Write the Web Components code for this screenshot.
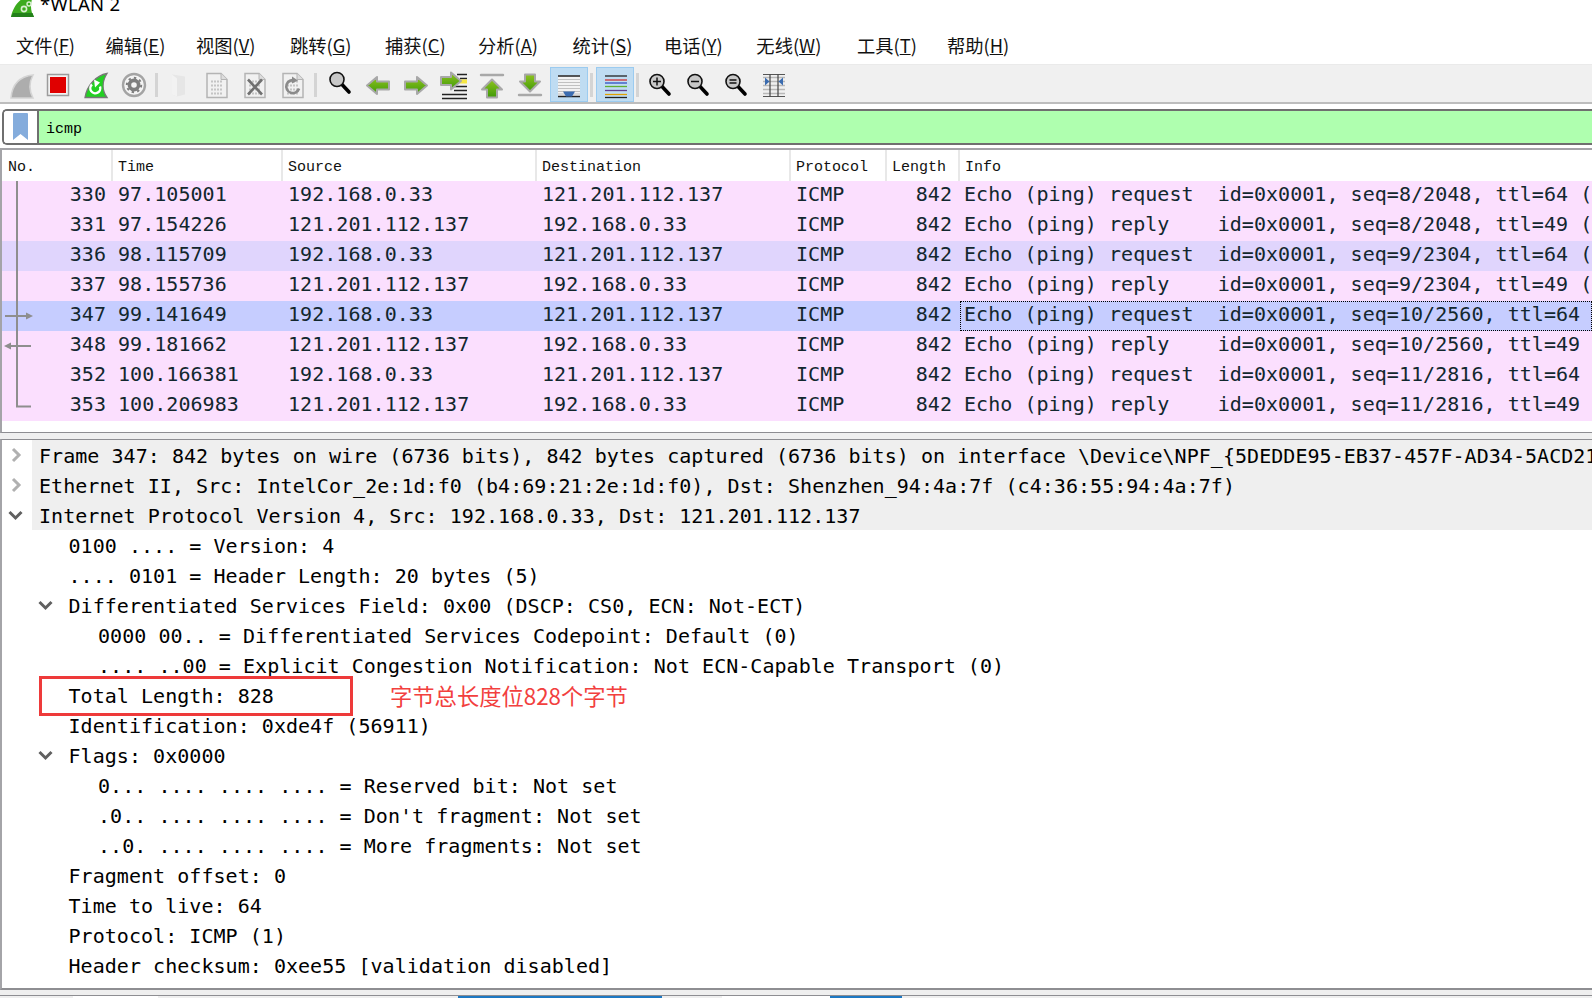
<!DOCTYPE html>
<html lang="zh">
<head>
<meta charset="utf-8">
<title>WLAN 2</title>
<style>
html, body { margin: 0; padding: 0; background: #fff; }
body {
    width: 1592px;
    height: 998px;
    overflow: hidden;
    font-family: "DejaVu Sans Mono", monospace;
    --cols: 109px 170px 254px 254px 96px 73px 1fr;
}
</style>
</head>
<body>
<ws-titlebar>*WLAN 2</ws-titlebar>
<ws-menubar>
    <ws-menu-item w="89.6">文件(<u>F</u>)</ws-menu-item>
    <ws-menu-item w="90.4">编辑(<u>E</u>)</ws-menu-item>
    <ws-menu-item w="94">视图(<u>V</u>)</ws-menu-item>
    <ws-menu-item w="95">跳转(<u>G</u>)</ws-menu-item>
    <ws-menu-item w="93">捕获(<u>C</u>)</ws-menu-item>
    <ws-menu-item w="94.6">分析(<u>A</u>)</ws-menu-item>
    <ws-menu-item w="91.4">统计(<u>S</u>)</ws-menu-item>
    <ws-menu-item w="92.4">电话(<u>Y</u>)</ws-menu-item>
    <ws-menu-item w="100.6">无线(<u>W</u>)</ws-menu-item>
    <ws-menu-item w="90">工具(<u>T</u>)</ws-menu-item>
    <ws-menu-item w="90">帮助(<u>H</u>)</ws-menu-item>
</ws-menubar>
<ws-toolbar></ws-toolbar>
<ws-filter>icmp</ws-filter>
<ws-packets>
    <ws-packet no="330" time="97.105001" src="192.168.0.33" dst="121.201.112.137" graph="line">Echo (ping) request  id=0x0001, seq=8/2048, ttl=64 (reply in 331)</ws-packet>
    <ws-packet no="331" time="97.154226" src="121.201.112.137" dst="192.168.0.33" graph="line">Echo (ping) reply    id=0x0001, seq=8/2048, ttl=49 (request in 330)</ws-packet>
    <ws-packet no="336" time="98.115709" src="192.168.0.33" dst="121.201.112.137" graph="line" mark="related">Echo (ping) request  id=0x0001, seq=9/2304, ttl=64 (reply in 337)</ws-packet>
    <ws-packet no="337" time="98.155736" src="121.201.112.137" dst="192.168.0.33" graph="line">Echo (ping) reply    id=0x0001, seq=9/2304, ttl=49 (request in 336)</ws-packet>
    <ws-packet no="347" time="99.141649" src="192.168.0.33" dst="121.201.112.137" graph="out" mark="selected">Echo (ping) request  id=0x0001, seq=10/2560, ttl=64 (reply in 348)</ws-packet>
    <ws-packet no="348" time="99.181662" src="121.201.112.137" dst="192.168.0.33" graph="in">Echo (ping) reply    id=0x0001, seq=10/2560, ttl=49 (request in 347)</ws-packet>
    <ws-packet no="352" time="100.166381" src="192.168.0.33" dst="121.201.112.137" graph="line">Echo (ping) request  id=0x0001, seq=11/2816, ttl=64 (reply in 353)</ws-packet>
    <ws-packet no="353" time="100.206983" src="121.201.112.137" dst="192.168.0.33" graph="end">Echo (ping) reply    id=0x0001, seq=11/2816, ttl=49 (request in 352)</ws-packet>
</ws-packets>
<ws-splitter></ws-splitter>
<ws-details>
    <ws-tree-row level="0" arrow="right" shade>Frame 347: 842 bytes on wire (6736 bits), 842 bytes captured (6736 bits) on interface \Device\NPF_{5DEDDE95-EB37-457F-AD34-5ACD21B1E0C7}, id 0</ws-tree-row>
    <ws-tree-row level="0" arrow="right" shade>Ethernet II, Src: IntelCor_2e:1d:f0 (b4:69:21:2e:1d:f0), Dst: Shenzhen_94:4a:7f (c4:36:55:94:4a:7f)</ws-tree-row>
    <ws-tree-row level="0" arrow="down" shade>Internet Protocol Version 4, Src: 192.168.0.33, Dst: 121.201.112.137</ws-tree-row>
    <ws-tree-row level="1">0100 .... = Version: 4</ws-tree-row>
    <ws-tree-row level="1">.... 0101 = Header Length: 20 bytes (5)</ws-tree-row>
    <ws-tree-row level="1" arrow="down">Differentiated Services Field: 0x00 (DSCP: CS0, ECN: Not-ECT)</ws-tree-row>
    <ws-tree-row level="2">0000 00.. = Differentiated Services Codepoint: Default (0)</ws-tree-row>
    <ws-tree-row level="2">.... ..00 = Explicit Congestion Notification: Not ECN-Capable Transport (0)</ws-tree-row>
    <ws-tree-row level="1">Total Length: 828</ws-tree-row>
    <ws-tree-row level="1">Identification: 0xde4f (56911)</ws-tree-row>
    <ws-tree-row level="1" arrow="down">Flags: 0x0000</ws-tree-row>
    <ws-tree-row level="2">0... .... .... .... = Reserved bit: Not set</ws-tree-row>
    <ws-tree-row level="2">.0.. .... .... .... = Don't fragment: Not set</ws-tree-row>
    <ws-tree-row level="2">..0. .... .... .... = More fragments: Not set</ws-tree-row>
    <ws-tree-row level="1">Fragment offset: 0</ws-tree-row>
    <ws-tree-row level="1">Time to live: 64</ws-tree-row>
    <ws-tree-row level="1">Protocol: ICMP (1)</ws-tree-row>
    <ws-tree-row level="1">Header checksum: 0xee55 [validation disabled]</ws-tree-row>
    <ws-note slot="note">字节总长度位828个字节</ws-note>
</ws-details>
<ws-bytes-strip></ws-bytes-strip>

<script>
// shark fin used by the capture buttons
const FIN = 'M32 8.500C18 10 11 19 10 31.500L32 31.500C28 24 28 16 32 8.500Z'

// page shape shared by the save / close / reload buttons
const doc = (inner) => `
    <path d="M9 7H23L29 13V31H9Z" fill="#f1f1f1" stroke="#b4b4b4" stroke-width="1.5"/>
    <path d="M23 7V13H29" fill="#ddd" stroke="#b4b4b4"/>
    <path d="M13 15H25M13 19H25M13 23H25M13 27H25" stroke="#c4c4c4" stroke-width="2" stroke-dasharray="2 1"/>
    ${inner}`

const lens = (inner, cx, cy) => `
    <path d="M${cx + 5} ${cy + 5}L${cx + 12} ${cy + 12.5}" stroke="#000" stroke-width="3.6" stroke-linecap="round"/>
    <circle cx="${cx}" cy="${cy}" r="7" fill="#c8c8c8" stroke="#111" stroke-width="1.6"/>
    ${inner}`

const GREEN = `<defs><linearGradient id="g" x1="0" y1="0" x2="0" y2="1"><stop offset="0" stop-color="#8fc31f"/><stop offset="1" stop-color="#3f9a08"/></linearGradient></defs>`
const ARROW = 'fill="url(#g)" stroke="#a8a8a8" stroke-width="2" stroke-linejoin="round"'

const ICONS = {
    fin: `<path d="${FIN}" fill="#adadad" stroke="#d4d4d4" stroke-width="1.5"/>`,
    stop: `<rect x="8.500" y="8" width="21" height="21" fill="#f2f2f2" stroke="#9c9c9c" stroke-width="1.5"/><rect x="11" y="10.500" width="16" height="16" fill="#e00000"/>`,
    restart: `<path d="M30 7C19 9 10 19 8 31L30 31C25 24 25 15 30 7Z" fill="#22d022" stroke="#777" stroke-width="1.3"/>
        <path d="M23 20A5 5 0 1 1 15 18" fill="none" stroke="#fff" stroke-width="2.400"/><path d="M17 13L23 16L18 21Z" fill="#fff"/>`,
    options: `<circle cx="19" cy="18.500" r="11" fill="#f4f4f4" stroke="#a4a4a4" stroke-width="2.400"/>
        <circle cx="19" cy="18.500" r="4.600" fill="none" stroke="#7e7e7e" stroke-width="3.600"/>
        <circle cx="19" cy="18.500" r="7.200" fill="none" stroke="#7e7e7e" stroke-width="2" stroke-dasharray="2.400 3.200"/>`,
    open: `<path d="M12 8L25 10V28L17 30L12 28Z" fill="#e6e6e6"/><path d="M12 8L17 12V30L12 28Z" fill="#f2f2f2"/>`,
    save: doc(''),
    close: doc(`<path d="M12 13L26 28M26 13L12 28" stroke="#707070" stroke-width="2.600"/>`),
    reload: doc(`<path d="M25 22A6.500 6.500 0 1 1 21 14" fill="none" stroke="#8a8a8a" stroke-width="2.600"/><path d="M18 10L24 14L18 17Z" fill="#8a8a8a"/>`),
    find: lens('', 16, 13),
    back: GREEN + `<path d="M8 19L18 10.500V15H30V23H18V27.500Z" ${ARROW}/>`,
    forward: GREEN + `<path d="M30 19L20 10.500V15H8V23H20V27.500Z" ${ARROW}/>`,
    goto: GREEN + `<path d="M19 20H32M19 24H32M7 28H32M7 32H32M22 8H32M25 12H32" stroke="#222" stroke-width="1.400"/><rect x="25" y="13" width="7" height="4" fill="#f5e642"/>
        <path d="M26 14.500L16 6V10.500H6V18.500H16V23Z" ${ARROW}/>`,
    top: GREEN + `<path d="M8 8.500H30" stroke="#a8a8a8" stroke-width="2.400" stroke-linecap="round"/><path d="M19 13L29 23H24V31H14V23H9Z" ${ARROW}/>`,
    bottom: GREEN + `<path d="M8 28.500H30" stroke="#a8a8a8" stroke-width="2.400" stroke-linecap="round"/><path d="M19 25L29 15H24V8H14V15H9Z" ${ARROW}/>`,
    autoscroll: `<rect x="8" y="9" width="22" height="21" fill="#f2f2f2"/><path d="M8 9.500H30M8 30H30" stroke="#222" stroke-width="1.400"/><path d="M8 13H30M8 16H30M8 19H30M8 22H30M8 25H30M8 27.500H30" stroke="#c0c0c0" stroke-width="1.100"/>
        <path d="M13 25H25L22 30H16Z" fill="#3b6cb0"/>`,
    colorize: `<path d="M9 9.500H31" stroke="#222" stroke-width="1.300"/><path d="M9 13.500H31" stroke="#d03030" stroke-width="1.300"/><path d="M9 16.500H31" stroke="#3050c0" stroke-width="1.300"/>
        <path d="M9 20H31" stroke="#60b030" stroke-width="1.300"/><path d="M9 24H31" stroke="#604090" stroke-width="1.300"/><path d="M9 28H31" stroke="#e0a000" stroke-width="1.300"/><path d="M9 31H31" stroke="#222" stroke-width="1.300"/>`,
    zoomin: lens(`<path d="M12 15H20M16 11V19" stroke="#111" stroke-width="1.500"/>`, 16, 15),
    zoomout: lens(`<path d="M12 15H20" stroke="#111" stroke-width="1.500"/>`, 16, 15),
    zoomreset: lens(`<path d="M12.500 13.500H19.500M12.500 16.500H19.500" stroke="#111" stroke-width="1.400"/>`, 16, 15),
    resize: `<path d="M8 11H30M8 15H30M8 19H30M8 23H30M8 27H30" stroke="#b8b8b8" stroke-width="1.400"/><path d="M8 8H30M8 30H30" stroke="#555" stroke-width="1"/>
        <path d="M15 8V30M23 8V30" stroke="#444" stroke-width="1.200"/><path d="M10 11V19L14.500 15ZM28 11V19L23.500 15Z" fill="#3b6cb0"/>`
}

class WsTitlebar extends HTMLElement {
    connectedCallback() {
        this.attachShadow({ mode: 'open' }).innerHTML = `
        <style>
            :host { display: flex; height: 28px; overflow: hidden; padding-left: 11px; box-sizing: border-box;
                font: 18.500px "Noto Sans", sans-serif; color: #000; }
            svg { flex: none; }
            .t { margin: -9px 0 0 6px; line-height: 26px; letter-spacing: .3px; }
        </style>
        <svg width="23" height="18" viewBox="0 0 23 18">
            <path d="M23 -6C10 -4 2 6 0 17L23 17C19 11 19 2 23 -6Z" fill="#3cab1e"/>
            <path d="M0 17L23 17L21.500 13L2 13Z" fill="#23801a"/>
            <circle cx="13" cy="9" r="2.600" fill="none" stroke="#d8eed0" stroke-width="1.600"/>
            <circle cx="18" cy="4" r="2" fill="none" stroke="#d8eed0" stroke-width="1.400"/>
        </svg>
        <div class="t"><slot></slot></div>`
    }
}

class WsMenubar extends HTMLElement {
    connectedCallback() {
        this.attachShadow({ mode: 'open' }).innerHTML = `
        <style>
            :host { display: flex; align-items: center; padding-left: 16px; box-sizing: border-box;
                border-bottom: 1px solid #eaeaea; height: 37px;
                font: 18.300px "Noto Sans CJK SC", "Noto Sans", sans-serif; color: #111; }
        </style>
        <slot></slot>`
    }
}

class WsMenuItem extends HTMLElement {
    connectedCallback() {
        this.attachShadow({ mode: 'open' }).innerHTML = `
        <style>:host { display: block; flex: none; width: ${this.getAttribute('w')}px; line-height: 35px; height: 36px; white-space: nowrap; }</style>
        <slot></slot>`
    }
}

class WsToolbar extends HTMLElement {
    connectedCallback() {
        const btn = (name, on) => `<div class="b ${on ? 'on' : ''}"><svg width="38" height="35" viewBox="0 0.500 38 35">${ICONS[name]}</svg></div>`
        const sep = (w) => `<div class="s" style="width:${w}px"></div>`
        this.attachShadow({ mode: 'open' }).innerHTML = `
        <style>
            :host { display: flex; align-items: flex-start; height: 37px; padding-left: 1px;
                background: #f0f0f0; border-bottom: 2px solid #bdbdbd; }
            .b { flex: none; position: relative; width: 38px; height: 35px; margin-top: 2px; }
            .b svg { display: block; }
            .b.on { background: #bfdcf2; margin-left: 1px; }
            .b.on::after { content: ""; position: absolute; inset: 0; border: 1.500px solid #9bcbf0; }
            .s { flex: none; height: 24px; margin-top: 8px; }
            .s::before { content: ""; display: block; width: 3px; height: 24px; margin-left: 2px; background: #d4d4d4; }
        </style>
        ${btn('fin')}${btn('stop')}${btn('restart')}${btn('options')}${sep(7)}
        ${btn('open')}${btn('save')}${btn('close')}${btn('reload')}${sep(9)}
        ${btn('find')}${btn('back')}${btn('forward')}${btn('goto')}${btn('top')}${btn('bottom')}
        ${btn('autoscroll', true)}${sep(7)}${btn('colorize', true)}${sep(7)}
        ${btn('zoomin')}${btn('zoomout')}${btn('zoomreset')}${btn('resize')}`
    }
}

class WsFilter extends HTMLElement {
    connectedCallback() {
        this.attachShadow({ mode: 'open' }).innerHTML = `
        <style>
            :host { display: flex; height: 36px; margin: 5px 0 0 2px; box-sizing: border-box;
                border: 2px solid #6f6f6f; border-right: 0; border-radius: 5px 0 0 5px; overflow: hidden;
                font: 15px "Liberation Mono", monospace; color: #000; }
            .mark { flex: none; width: 33px; background: #fff; border-right: 2px solid #6f6f6f; display: flex; align-items: center; justify-content: center; }
            .txt { flex: 1; background: #afffaf; padding-left: 7px; line-height: 37px; }
        </style>
        <div class="mark"><svg width="17" height="28" viewBox="0 0 17 28"><path d="M1 1Q1 0 2 0H15Q16 0 16 1V27L8.500 21L1 27Z" fill="#84acdc"/></svg></div>
        <div class="txt"><slot></slot></div>`
    }
}

class WsPackets extends HTMLElement {
    connectedCallback() {
        const heads = ['No.', 'Time', 'Source', 'Destination', 'Protocol', 'Length', 'Info']
        this.attachShadow({ mode: 'open' }).innerHTML = `
        <style>
            :host { display: block; height: 285px; margin-top: 3px; box-sizing: border-box; overflow: hidden;
                border-top: 2px solid #a4a4a8; border-left: 2px solid #a4a4a8; border-bottom: 1px solid #8e8e92; }
            .head { display: grid; grid-template-columns: var(--cols); height: 31px;
                font: 15px "Liberation Mono", monospace; color: #111; }
            .head div { padding-left: 5px; line-height: 35px; height: 31px; overflow: hidden; border-left: 2px solid #e8e8e8; box-sizing: border-box; }
            .head div:first-child { padding-left: 6px; border: 0; }
        </style>
        <div class="head">${heads.map(h => `<div>${h}</div>`).join('')}</div>
        <slot></slot>`
    }
}

class WsPacket extends HTMLElement {
    connectedCallback() {
        const a = (n) => this.getAttribute(n)
        const g = a('graph')
        const parts = {
            line: '<path d="M15 0V30" />',
            out: '<path d="M15 0V30M3 15H24" /><path d="M24 11.500L31 15L24 18.500Z" fill="#8e8e8e" stroke="none"/>',
            in: '<path d="M15 0V30M8 15H29" /><path d="M9 11.500L2 15L9 18.500Z" fill="#8e8e8e" stroke="none"/>',
            end: '<path d="M15 0V15.500H29" fill="none"/>'
        }
        const bg = { related: '#e0d5fd', selected: '#c6cdff' }[a('mark')] || '#fbdffe'
        this.attachShadow({ mode: 'open' }).innerHTML = `
        <style>
            :host { display: grid; grid-template-columns: var(--cols); height: 30px; background: ${bg};
                font-size: 20px; letter-spacing: .04px; line-height: 26px; color: #12272e; white-space: pre; }
            .c { padding-left: 7px; overflow: hidden; }
            .r { padding: 0 6px 0 0; text-align: right; }
            .no { display: flex; justify-content: space-between; padding: 0 5px 0 0; }
            .no svg { flex: none; }
            .info { padding-left: 4px; margin-left: 2px; overflow: hidden; ${a('mark') === 'selected' ? 'outline: 1px dotted #000; outline-offset: -1px;' : ''} }
        </style>
        <div class="no"><svg width="34" height="30" viewBox="0 0 34 30" stroke="#8e8e8e" stroke-width="2">${parts[g]}</svg><span>${a('no')}</span></div>
        <div class="c">${a('time')}</div>
        <div class="c">${a('src')}</div>
        <div class="c">${a('dst')}</div>
        <div class="c">ICMP</div>
        <div class="r">842</div>
        <div class="info"><slot></slot></div>`
    }
}

class WsSplitter extends HTMLElement {
    connectedCallback() {
        this.attachShadow({ mode: 'open' }).innerHTML = `<style>:host { display: block; height: 6px; background: #f0f0f0; }</style>`
    }
}

class WsDetails extends HTMLElement {
    connectedCallback() {
        this.attachShadow({ mode: 'open' }).innerHTML = `
        <style>
            :host { display: block; position: relative; height: 551px; box-sizing: border-box; overflow: hidden;
                background: #fff; border-top: 1px solid #8e8e92; border-left: 2px solid #a4a4a8; border-bottom: 2px solid #8e8e92; }
            /* annotation drawn on top of the tree */
            .box { position: absolute; left: 37px; top: 236px; width: 314px; height: 40px; box-sizing: border-box; border: 3px solid #ee3a3a; }
            .note { position: absolute; left: 388px; top: 235px; line-height: 40px; }
        </style>
        <slot></slot>
        <div class="box"></div>
        <div class="note"><slot name="note"></slot></div>`
    }
}

class WsTreeRow extends HTMLElement {
    connectedCallback() {
        const level = +this.getAttribute('level')
        const arrow = this.getAttribute('arrow')
        const marks = {
            right: '<path d="M11 9L17 15L11 21" stroke="#b0b0b0"/>',
            down: '<path d="M7.500 12L13.500 18L19.500 12" stroke="#606060"/>'
        }
        this.attachShadow({ mode: 'open' }).innerHTML = `
        <style>
            :host { display: flex; height: 30px; padding-left: ${level * 29.5}px;
                font-size: 20px; letter-spacing: .04px; line-height: 32px; color: #000; white-space: pre; }
            svg { flex: none; }
            .t { flex: 1; padding-left: 7px; height: 30px; ${this.hasAttribute('shade') ? 'background: #efefef;' : ''} }
        </style>
        <svg width="30" height="30" viewBox="0 0 30 30" fill="none" stroke-width="3">${marks[arrow] || ''}</svg>
        <div class="t"><slot></slot></div>`
    }
}

class WsNote extends HTMLElement {
    connectedCallback() {
        this.attachShadow({ mode: 'open' }).innerHTML = `
        <style>:host { display: block; font: 22.300px "Noto Sans CJK SC", "Noto Sans", sans-serif; color: #f2403e; line-height: 40px; white-space: nowrap; }</style>
        <slot></slot>`
    }
}

class WsBytesStrip extends HTMLElement {
    connectedCallback() {
        this.attachShadow({ mode: 'open' }).innerHTML = `
        <style>
            :host { display: block; height: 8px; padding-top: 5px; background: #efefef; }
            .tabs { display: grid; grid-template-columns: 73px 85px 300px 204px 60px 108px 72px 1fr; height: 2px; border-top: 1px solid #8e8e92; }
            .w { background: #fff; }
            .b { background: #1e78c2; }
        </style>
        <div class="tabs"><div></div><div class="w"></div><div></div><div class="b"></div><div></div><div class="w"></div><div class="b"></div><div></div></div>`
    }
}

customElements.define('ws-titlebar', WsTitlebar)
customElements.define('ws-menubar', WsMenubar)
customElements.define('ws-menu-item', WsMenuItem)
customElements.define('ws-toolbar', WsToolbar)
customElements.define('ws-filter', WsFilter)
customElements.define('ws-packets', WsPackets)
customElements.define('ws-packet', WsPacket)
customElements.define('ws-splitter', WsSplitter)
customElements.define('ws-details', WsDetails)
customElements.define('ws-tree-row', WsTreeRow)
customElements.define('ws-note', WsNote)
customElements.define('ws-bytes-strip', WsBytesStrip)
</script>
</body>
</html>
